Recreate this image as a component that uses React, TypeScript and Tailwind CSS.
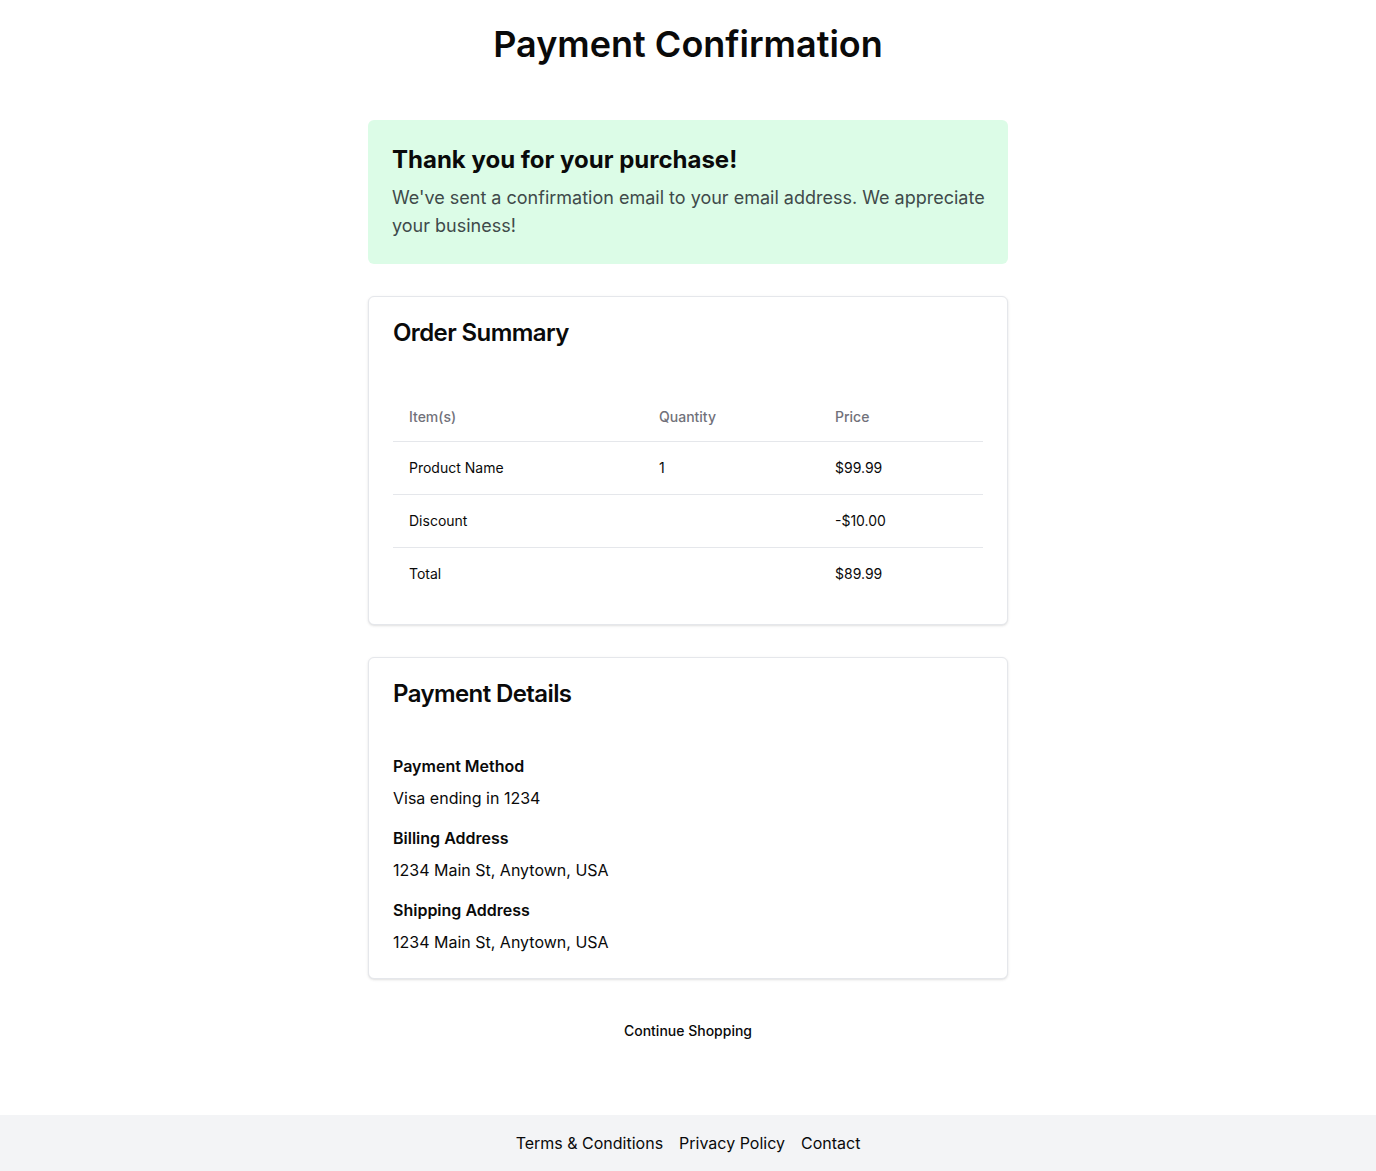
import React from "react";

export default function App() {
  return (
    <div
      className="min-h-screen flex flex-col bg-white text-[#0a0a0a]"
      style={{ fontFamily: "Inter, 'Noto Sans', sans-serif" }}
    >
      <header className="py-6 text-center">
        <h1 className="text-4xl font-semibold leading-10">Payment Confirmation</h1>
      </header>
      <main className="flex-1 w-full max-w-[640px] mx-auto mt-[32px]">
        <section className="rounded-md bg-[#dcfce7] p-6">
          <h2 className="text-2xl font-bold leading-8 mb-2">Thank you for your purchase!</h2>
          <p className="text-lg leading-7 text-[#3f4a4a] -mr-4">
            We've sent a confirmation email to your email address. We appreciate your business!
          </p>
        </section>

        <section className="mt-8 rounded-md border border-[#e5e7eb] bg-white shadow-sm">
          <div className="p-6">
            <h2 className="text-2xl font-semibold leading-none tracking-tight">Order Summary</h2>
          </div>
          <div className="px-6 pb-6 pt-6">
            <table className="w-full table-fixed text-sm text-left border-collapse">
              <thead>
                <tr className="border-b border-[#e5e7eb]">
                  <th className="h-12 px-4 font-medium text-[#71717a] w-[250px]">Item(s)</th>
                  <th className="h-12 px-4 font-medium text-[#71717a] w-[176px]">Quantity</th>
                  <th className="h-12 px-4 font-medium text-[#71717a]">Price</th>
                </tr>
              </thead>
              <tbody>
                <tr className="border-b border-[#e5e7eb]">
                  <td className="p-4">Product Name</td>
                  <td className="p-4">1</td>
                  <td className="p-4">$99.99</td>
                </tr>
                <tr className="border-b border-[#e5e7eb]">
                  <td className="p-4">Discount</td>
                  <td className="p-4"></td>
                  <td className="p-4">-$10.00</td>
                </tr>
                <tr>
                  <td className="p-4">Total</td>
                  <td className="p-4"></td>
                  <td className="p-4">$89.99</td>
                </tr>
              </tbody>
            </table>
          </div>
        </section>

        <section className="mt-8 rounded-md border border-[#e5e7eb] bg-white shadow-sm">
          <div className="p-6">
            <h2 className="text-2xl font-semibold leading-none tracking-tight">Payment Details</h2>
          </div>
          <div className="px-6 pb-6 pt-6 flex flex-col gap-4">
            <div>
              <h3 className="font-semibold leading-6">Payment Method</h3>
              <p className="mt-2 leading-6">Visa ending in 1234</p>
            </div>
            <div>
              <h3 className="font-semibold leading-6">Billing Address</h3>
              <p className="mt-2 leading-6">1234 Main St, Anytown, USA</p>
            </div>
            <div>
              <h3 className="font-semibold leading-6">Shipping Address</h3>
              <p className="mt-2 leading-6">1234 Main St, Anytown, USA</p>
            </div>
          </div>
        </section>

        <div className="mt-8 flex justify-center">
          <button className="h-10 px-4 py-2 text-sm font-medium rounded-md">Continue Shopping</button>
        </div>
      </main>
      <footer className="bg-[#f3f4f6] py-4 flex justify-center gap-4 text-base leading-6">
        <a>Terms &amp; Conditions</a>
        <a>Privacy Policy</a>
        <a>Contact</a>
      </footer>
    </div>
  );
}
